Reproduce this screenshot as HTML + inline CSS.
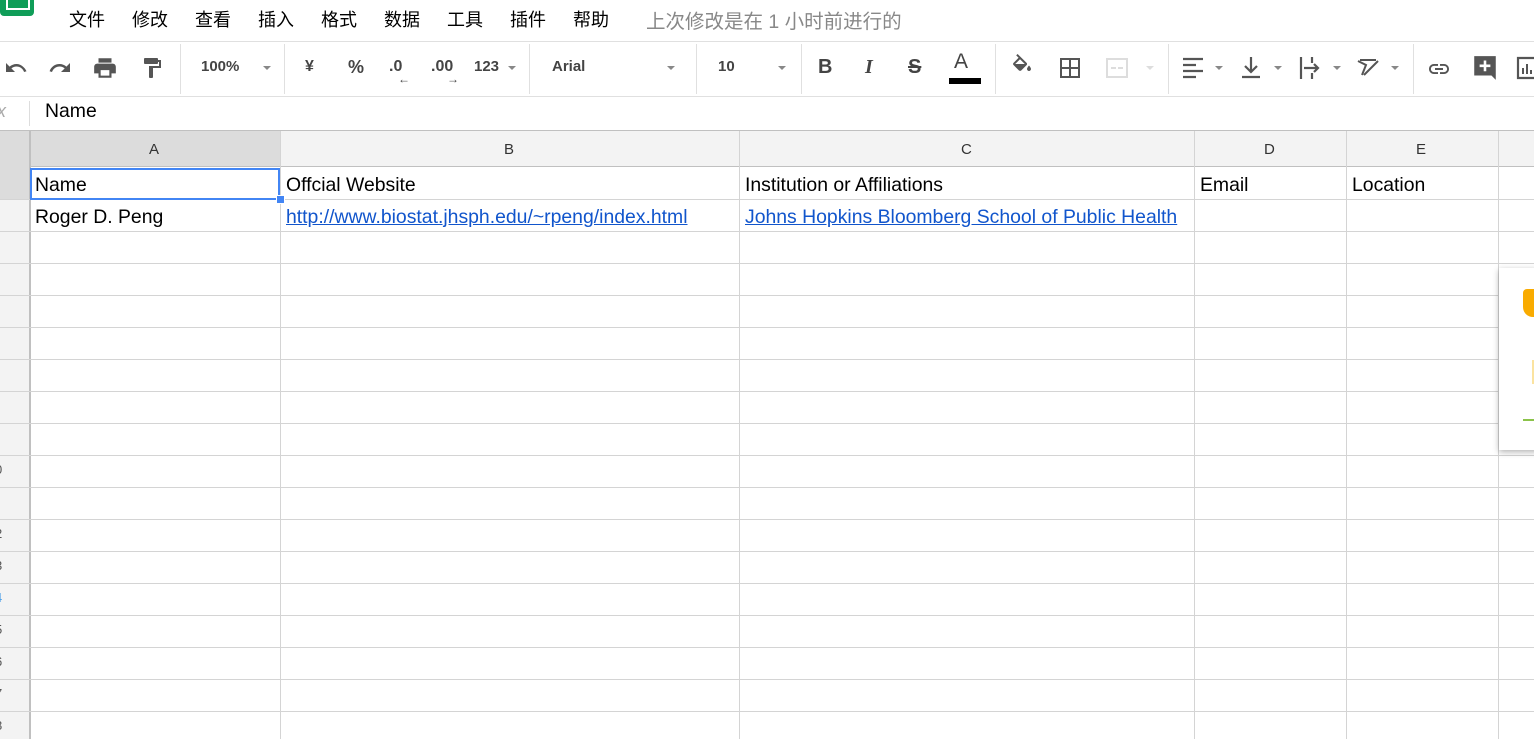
<!DOCTYPE html>
<html><head><meta charset="utf-8"><style>
body{margin:0;width:1534px;height:739px;overflow:hidden;background:#fff;font-family:"Liberation Sans","Noto Sans CJK SC",sans-serif;position:relative}
.a{position:absolute}
.menu span{position:absolute;top:6px;font-size:18px;color:#000}
.tb{position:absolute;top:41px;left:0;width:1534px;height:54px;border-top:1px solid #e0e0e0;border-bottom:1px solid #e0e0e0;background:#fff}
.sep{position:absolute;top:2px;width:1px;height:50px;background:#e0e0e0}
.t{position:absolute;top:16px;font-size:16px;font-weight:bold;color:#444}
.dd{position:absolute;top:24px;width:0;height:0;border-left:4px solid transparent;border-right:4px solid transparent;border-top:4px solid #888}
.vl{position:absolute;top:131px;width:1px;height:608px;background:#d4d4d4}
.hl{position:absolute;left:0;width:1534px;height:1px;background:#d4d4d4}
.cell{position:absolute;font-size:19.4px;color:#000}
.lnk{color:#1155cc;text-decoration:underline}
.ch{position:absolute;top:141px;font-size:15px;color:#333}
.rn{position:absolute;left:-5px;font-size:13px;color:#555}
</style></head><body>
<div class="a" style="left:0;top:-12px;width:34px;height:28px;background:#0f9d58;border-radius:4px"></div>
<div class="a" style="left:6px;top:0;width:20px;height:8px;border:2px solid #fff;border-top:none"></div>
<div class="menu">
<span style="left:69px">文件</span><span style="left:132px">修改</span><span style="left:195px">查看</span><span style="left:258px">插入</span><span style="left:321px">格式</span><span style="left:384px">数据</span><span style="left:447px">工具</span><span style="left:510px">插件</span><span style="left:573px">帮助</span>
<span style="left:646px;color:#888;font-size:19.5px;top:5px">上次修改是在 1 小时前进行的</span>
</div>
<div class="tb">
<svg class="a" style="left:3px;top:14px" width="26" height="24" viewBox="0 0 24 24"><path d="M12.5 8c-2.6 0-5 1-6.9 2.6L2 7v9h9l-3.6-3.6c1.4-1.2 3.2-1.9 5.1-1.9 3.5 0 6.5 2.3 7.6 5.5l2.4-.8C21 11.9 17.1 8 12.5 8z" fill="#555"/></svg>
<svg class="a" style="left:47px;top:14px" width="26" height="24" viewBox="0 0 24 24"><path d="M18.4 10.6C16.6 9 14.2 8 11.5 8 6.9 8 3 11 1.6 15.2l2.4.8c1.1-3.2 4.1-5.5 7.6-5.5 2 0 3.7.7 5.1 1.9L13 16h9V7l-3.6 3.6z" fill="#555"/></svg>
<svg class="a" style="left:92px;top:13px" width="26" height="26" viewBox="0 0 24 24"><path d="M19 8H5c-1.7 0-3 1.3-3 3v6h4v4h12v-4h4v-6c0-1.7-1.3-3-3-3zm-3 11H8v-5h8v5zM18 3H6v4h12V3z" fill="#555"/></svg>
<svg class="a" style="left:140px;top:13px" width="24" height="26" viewBox="0 0 24 24"><path d="M18 4V3c0-.6-.4-1-1-1H5c-.6 0-1 .4-1 1v4c0 .6.4 1 1 1h12c.6 0 1-.4 1-1V6h1v4H9v11c0 .6.4 1 1 1h2c.6 0 1-.4 1-1v-9h8V4h-3z" fill="#555"/></svg>
<div class="sep" style="left:180px"></div>
<span class="t" style="left:201px;font-size:15px">100%</span><div class="dd" style="left:263px"></div>
<div class="sep" style="left:284px"></div>
<span class="t" style="left:305px">¥</span><span class="t" style="left:348px;font-size:18px;top:15px">%</span>
<span class="t" style="left:389px">.0</span><span class="a" style="left:398px;top:30px;font-size:12px;color:#444">←</span>
<span class="t" style="left:431px">.00</span><span class="a" style="left:447px;top:30px;font-size:12px;color:#444">→</span>
<span class="t" style="left:474px;font-size:15px">123</span><div class="dd" style="left:508px"></div>
<div class="sep" style="left:529px"></div>
<span class="t" style="left:552px;font-size:15px">Arial</span><div class="dd" style="left:667px"></div>
<div class="sep" style="left:696px"></div>
<span class="t" style="left:718px;font-size:15px">10</span><div class="dd" style="left:778px"></div>
<div class="sep" style="left:801px"></div>
<span class="t" style="left:818px;font-size:20px;top:14px">B</span>
<span class="t" style="left:865px;font-size:20px;top:14px;font-style:italic;font-family:'Liberation Serif'">I</span>
<span class="t" style="left:908px;font-size:20px;top:14px;text-decoration:line-through">S</span>
<span class="a" style="left:954px;top:8px;font-size:21px;color:#444">A</span><div class="a" style="left:949px;top:36px;width:32px;height:6px;background:#000"></div>
<div class="sep" style="left:995px"></div>
<svg class="a" style="left:1010px;top:12px" width="24" height="24" viewBox="0 0 24 24"><path d="M16.6 8.9 7.6 0 6.2 1.4l2.4 2.4-5.1 5.1c-.6.6-.6 1.5 0 2.1l5.5 5.5c.3.3.7.4 1.1.4s.8-.1 1.1-.4l5.5-5.5c.5-.6.5-1.6-.1-2.1zM5.2 10 10 5.2l4.8 4.8H5.2zM19 11.5s-2 2.2-2 3.5c0 1.1.9 2 2 2s2-.9 2-2c0-1.3-2-3.5-2-3.5z" fill="#555"/></svg>
<svg class="a" style="left:1059px;top:15px" width="22" height="22" viewBox="0 0 22 22"><path d="M1 1h20v20H1zM3 3v7h7V3zM12 3v7h7V3zM3 12v7h7v-7zM12 12v7h7v-7z" fill="#555" fill-rule="evenodd"/></svg>
<svg class="a" style="left:1105px;top:15px" width="24" height="22" viewBox="0 0 24 22"><path d="M1 1h22v20H1zM3 3v16h18V3z" fill="#ddd" fill-rule="evenodd"/><path d="M6 11h5M13 11h5" stroke="#ddd" stroke-width="2"/></svg><div class="dd" style="left:1146px;border-top-color:#ddd"></div>
<div class="sep" style="left:1168px"></div>
<svg class="a" style="left:1182px;top:15px" width="22" height="22" viewBox="0 0 22 22"><path d="M1 2h20M1 8h13M1 14h20M1 20h13" stroke="#555" stroke-width="2.2"/></svg><div class="dd" style="left:1215px"></div>
<svg class="a" style="left:1240px;top:13px" width="22" height="24" viewBox="0 0 22 24"><path d="M11 2v14M5 11l6 6 6-6M2 22h18" stroke="#555" stroke-width="2.2" fill="none"/></svg><div class="dd" style="left:1274px"></div>
<svg class="a" style="left:1298px;top:13px" width="26" height="26" viewBox="0 0 26 26"><path d="M3 2v22M14 2v6M14 18v6M6 13h14M16 9l4 4-4 4" stroke="#555" stroke-width="2.2" fill="none"/></svg><div class="dd" style="left:1333px"></div>
<svg class="a" style="left:1356px;top:13px" width="26" height="26" viewBox="0 0 26 26"><path d="M2 6l8 4-4 10M4 5h16M8 20L22 6" stroke="#555" stroke-width="2" fill="none"/></svg><div class="dd" style="left:1391px"></div>
<div class="sep" style="left:1413px"></div>
<svg class="a" style="left:1425px;top:15px" width="28" height="24" viewBox="0 0 24 24"><path d="M3.9 12c0-1.7 1.4-3.1 3.1-3.1h4V7H7c-2.8 0-5 2.2-5 5s2.2 5 5 5h4v-1.9H7c-1.7 0-3.1-1.4-3.1-3.1zM8 13h8v-2H8v2zm9-6h-4v1.9h4c1.7 0 3.1 1.4 3.1 3.1s-1.4 3.1-3.1 3.1h-4V17h4c2.8 0 5-2.2 5-5s-2.2-5-5-5z" fill="#555"/></svg>
<svg class="a" style="left:1472px;top:12px" width="26" height="28" viewBox="0 0 24 26"><path d="M2 2h20v22l-4-4H2z" fill="#555"/><path d="M12 6v10M7 11h10" stroke="#fff" stroke-width="2.4"/></svg>
<svg class="a" style="left:1516px;top:14px" width="22" height="24" viewBox="0 0 22 24"><path d="M2 2h18v20H2z" stroke="#555" stroke-width="2.2" fill="none"/><path d="M7 18v-6M11 18V8M15 18v-4" stroke="#555" stroke-width="2"/></svg>
</div>
<span class="a" style="left:-3px;top:101px;font-size:18px;color:#aaa;font-style:italic">x</span>
<div class="a" style="left:29px;top:101px;width:1px;height:25px;background:#ddd"></div>
<span class="a" style="left:45px;top:100px;font-size:19.4px">Name</span>
<div class="a" style="left:0;top:130px;width:1534px;height:1px;background:#c0c0c0"></div>
<div class="a" style="left:0;top:131px;width:29px;height:608px;background:#f3f3f3"></div>
<div class="a" style="left:29px;top:131px;width:1505px;height:36px;background:#f3f3f3"></div>
<div class="a" style="left:29px;top:131px;width:251px;height:36px;background:#dcdcdc"></div>
<div class="a" style="left:0;top:166px;width:1534px;height:1px;background:#c0c0c0"></div>
<div class="a" style="left:0;top:131px;width:29px;height:68px;background:#dcdcdc"></div>
<div class="a" style="left:29px;top:131px;width:2px;height:608px;background:#c0c0c0"></div>
<div class="vl" style="left:280px"></div><div class="vl" style="left:739px"></div><div class="vl" style="left:1194px"></div><div class="vl" style="left:1346px"></div><div class="vl" style="left:1498px"></div>
<span class="ch" style="left:149px">A</span><span class="ch" style="left:504px">B</span><span class="ch" style="left:961px">C</span><span class="ch" style="left:1264px">D</span><span class="ch" style="left:1416px">E</span>
<div class="hl" style="top:199px"></div><div class="hl" style="top:231px"></div><div class="hl" style="top:263px"></div><div class="hl" style="top:295px"></div><div class="hl" style="top:327px"></div><div class="hl" style="top:359px"></div><div class="hl" style="top:391px"></div><div class="hl" style="top:423px"></div><div class="hl" style="top:455px"></div><div class="hl" style="top:487px"></div><div class="hl" style="top:519px"></div><div class="hl" style="top:551px"></div><div class="hl" style="top:583px"></div><div class="hl" style="top:615px"></div><div class="hl" style="top:647px"></div><div class="hl" style="top:679px"></div><div class="hl" style="top:711px"></div>
<span class="rn" style="top:462px">0</span><span class="rn" style="top:526px">2</span><span class="rn" style="top:558px">3</span><span class="rn" style="top:590px;color:#4a9ee8">4</span><span class="rn" style="top:622px">5</span><span class="rn" style="top:654px">6</span><span class="rn" style="top:686px">7</span><span class="rn" style="top:718px">8</span>
<div class="a" style="left:30px;top:168px;width:246px;height:28px;border:2px solid #4285f4"></div>
<div class="a" style="left:276px;top:195px;width:7px;height:7px;background:#4285f4;border:1px solid #fff"></div>
<span class="cell" style="left:35px;top:174px">Name</span>
<span class="cell" style="left:286px;top:174px">Offcial Website</span>
<span class="cell" style="left:745px;top:174px">Institution or Affiliations</span>
<span class="cell" style="left:1200px;top:174px">Email</span>
<span class="cell" style="left:1352px;top:174px">Location</span>
<span class="cell" style="left:35px;top:206px">Roger D. Peng</span>
<span class="cell lnk" style="left:286px;top:206px">http://www.biostat.jhsph.edu/~rpeng/index.html</span>
<span class="cell lnk" style="left:745px;top:206px">Johns Hopkins Bloomberg School of Public Health</span>
<div class="a" style="left:1499px;top:268px;width:40px;height:182px;background:#fff;box-shadow:0 2px 6px rgba(0,0,0,.3)"></div>
<div class="a" style="left:1523px;top:289px;width:14px;height:28px;background:#f9ab00;border-radius:4px 0 0 10px"></div>
<div class="a" style="left:1532px;top:360px;width:4px;height:24px;background:#fbe3a0"></div>
<div class="a" style="left:1523px;top:419px;width:14px;height:2px;background:#8bc34a"></div>
</body></html>
